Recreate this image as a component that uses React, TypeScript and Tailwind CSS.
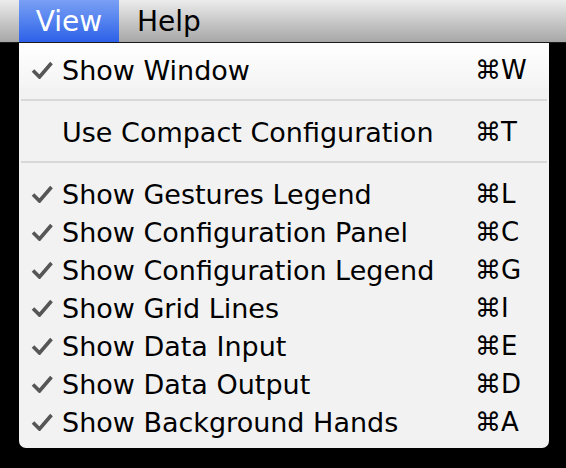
import React from "react";

const Check = () => (
  <svg width="22" height="18" viewBox="0 0 22 18" className="block">
    <path d="M2 9.5 L8.5 16 L20.5 2" fill="none" stroke="#565656" strokeWidth="3.6" strokeLinecap="butt" strokeLinejoin="miter" />
  </svg>
);

type Item = { label: string; key: string; checked: boolean };

const Row = ({ item }: { item: Item }) => (
  <div className="flex h-[38px] items-center">
    <div className="flex w-[43px] justify-end pr-[9px] pt-[1px]">{item.checked ? <Check /> : null}</div>
    <div className="flex-1 pt-[2px] text-[27px] leading-none text-black">{item.label}</div>
    <div className="w-[74px] pt-[2px] text-[26px] leading-none text-black">⌘{item.key}</div>
  </div>
);

const Sep = () => (
  <div className="py-[11px] pl-[2px] pr-[2px]">
    <div className="h-[2px] bg-[#d8d8d8]" />
  </div>
);

export default function App() {
  const group: Item[] = [
    { label: "Show Gestures Legend", key: "L", checked: true },
    { label: "Show Configuration Panel", key: "C", checked: true },
    { label: "Show Configuration Legend", key: "G", checked: true },
    { label: "Show Grid Lines", key: "I", checked: true },
    { label: "Show Data Input", key: "E", checked: true },
    { label: "Show Data Output", key: "D", checked: true },
    { label: "Show Background Hands", key: "A", checked: true },
  ];
  return (
    <div
      className="min-h-[468px] w-[566px] bg-black"
      style={{ fontFamily: '"DejaVu Sans", sans-serif' }}
    >
      <div className="flex h-[43px] border-b border-[#1a1a1a] bg-gradient-to-b from-[#ececec] to-[#a7a7a7] pl-[19px]">
        <div className="flex w-[100px] items-center justify-center bg-gradient-to-b from-[#7aa0f4] to-[#2d60e8] pt-[1px] text-[28px] text-white">
          View
        </div>
        <div className="flex items-center pl-[18px] pt-[1px] text-[28px] text-black">Help</div>
      </div>
      <div className="ml-[19px] w-[530px] overflow-hidden rounded-b-[7px] bg-[#f2f2f2] pb-[8px]">
        <div className="bg-gradient-to-b from-white to-[#f4f4f4] pt-[7px]">
          <Row item={{ label: "Show Window", key: "W", checked: true }} />
        </div>
        <Sep />
        <Row item={{ label: "Use Compact Configuration", key: "T", checked: false }} />
        <Sep />
        {group.map((g) => (
          <Row key={g.label} item={g} />
        ))}
      </div>
    </div>
  );
}
